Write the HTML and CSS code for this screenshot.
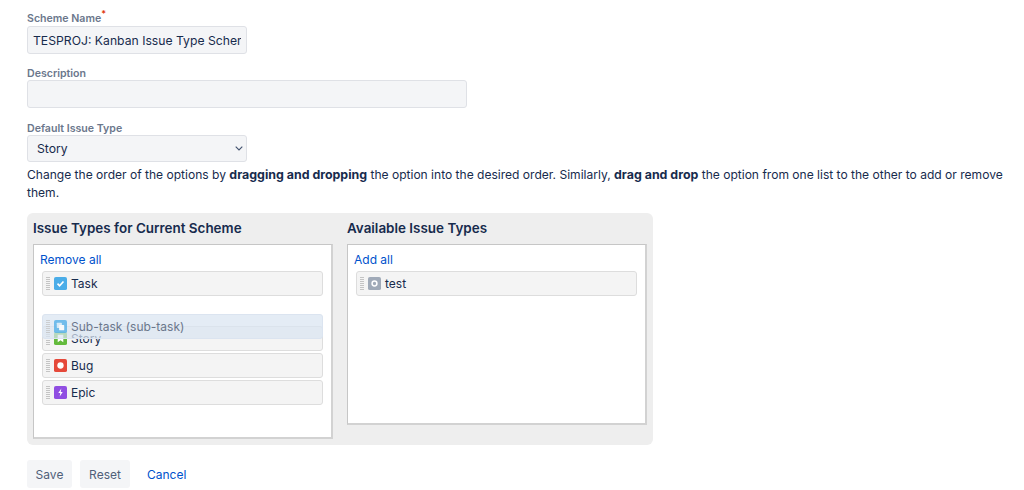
FILE: index.html
```html
<!DOCTYPE html>
<html lang="en">
<head>
<meta charset="utf-8">
<title>Issue Type Scheme</title>
<link rel="stylesheet" href="styles.css">
</head>
<body>
<form class="page">
  <div class="field name-field">
    <label class="label">Scheme Name<sup class="req">*</sup></label>
    <div class="input narrow"><span class="clip">TESPROJ: Kanban Issue Type Scheme</span></div>
  </div>
  <div class="field desc-field">
    <label class="label">Description</label>
    <div class="input wide"></div>
  </div>
  <div class="field type-field">
    <label class="label">Default Issue Type</label>
    <div class="input narrow select"><span>Story</span>
      <svg class="chev" width="8" height="5" viewBox="0 0 8 5"><path d="M.7.7L4 4l3.3-3.3" fill="none" stroke="#42526e" stroke-width="1.1"/></svg>
    </div>
  </div>
  <p class="help">Change the order of the options by <b>dragging and dropping</b> the option into the desired order. Similarly, <b>drag and drop</b> the option from one list to the other to add or remove them.</p>

  <div class="panel">
    <section class="col">
      <h3 class="col-title">Issue Types for Current Scheme</h3>
      <div class="list tall">
        <a class="link list-link">Remove all</a>
        <div class="item">
          <i class="grip"></i>
          <svg class="ic" viewBox="0 0 14 14"><rect width="14" height="14" rx="2" fill="#4bade8"/><path d="M3.8 7.2l2.2 2.2 4.2-4.6" fill="none" stroke="#fff" stroke-width="1.8"/></svg>
          <span>Task</span>
        </div>
        <div class="slot"></div>
        <div class="item">
          <i class="grip"></i>
          <svg class="ic" viewBox="0 0 14 14"><rect width="14" height="14" rx="2" fill="#63ba3c"/><path d="M4 3h6v8L7 9l-3 2z" fill="#fff"/></svg>
          <span>Story</span>
        </div>
        <div class="item">
          <i class="grip"></i>
          <svg class="ic" viewBox="0 0 14 14"><rect width="14" height="14" rx="2" fill="#e5493a"/><circle cx="7" cy="7" r="3.4" fill="#fff"/></svg>
          <span>Bug</span>
        </div>
        <div class="item">
          <i class="grip"></i>
          <svg class="ic" viewBox="0 0 14 14"><rect width="14" height="14" rx="2" fill="#904ee2"/><path d="M7.9 2.6L4.6 7.6h2.2L6.1 11.4l3.3-5H7.2z" fill="#fff"/></svg>
          <span>Epic</span>
        </div>
        <div class="item dragging">
          <i class="grip"></i>
          <svg class="ic" viewBox="0 0 14 14"><rect width="14" height="14" rx="2" fill="#4bade8"/><rect x="3" y="3" width="5.5" height="5.5" rx=".6" fill="#fff" opacity=".75"/><rect x="5.5" y="5.5" width="5.5" height="5.5" rx=".6" fill="#fff"/></svg>
          <span>Sub-task (sub-task)</span>
        </div>
      </div>
    </section>
    <section class="col">
      <h3 class="col-title">Available Issue Types</h3>
      <div class="list short">
        <a class="link list-link">Add all</a>
        <div class="item">
          <i class="grip"></i>
          <svg class="ic" viewBox="0 0 14 14"><rect width="14" height="14" rx="2" fill="#a0aab8"/><circle cx="7" cy="7" r="2.6" fill="none" stroke="#fff" stroke-width="1.6"/></svg>
          <span>test</span>
        </div>
      </div>
    </section>
  </div>

  <div class="actions">
    <button type="button" class="btn save">Save</button>
    <button type="button" class="btn">Reset</button>
    <a class="link cancel">Cancel</a>
  </div>
</form>
</body>
</html>
```
FILE: styles.css
```css
* { box-sizing: border-box; }
html, body { margin: 0; height: 490px; overflow: hidden; background: #fff; }
body { font-family: Inter, "Liberation Sans", sans-serif; font-size: 12px; color: #172b4d; }
.page { padding: 12px 0 0 27px; display: flex; flex-direction: column; }
.field { display: flex; flex-direction: column; }
.label { font-size: 10.6px; font-weight: 600; color: #6b778c; line-height: 14px; height: 14px; }
.desc-field .label, .type-field .label { height: 13px; }
.req { color: #de350b; font-size: 9px; line-height: 0; vertical-align: 5px; }
.input { height: 28px; background: #f4f5f7; border: 1px solid #dfe1e6; border-radius: 3px; display: flex; align-items: center; padding: 0 5px; font-size: 12.2px; color: #172b4d; }
.narrow { width: 220px; }
.wide { width: 440px; }
.clip { display: block; overflow: hidden; white-space: nowrap; width: 208px; }
.desc-field { margin-top: 13px; }
.type-field { margin-top: 14px; }
.select { justify-content: space-between; padding: 0 3px 0 9px; height: 27px; }
.chev { display: block; }
.help { margin: 4px 0 0; line-height: 18px; font-size: 12.06px; color: #172b4d; width: 985px; }
.help b { font-size: 12.4px; font-weight: 700; }
.panel { width: 626px; height: 232px; margin-top: 11px; padding: 6px 6px 7px; background: #eeeeee; border-radius: 6px; display: flex; gap: 14px; align-items: flex-start; }
.col { width: 300px; }
.col-title { margin: 0 0 6px; font-size: 13.45px; line-height: 19px; font-weight: 600; color: #172b4d; }
.list { position: relative; width: 300px; background: #fff; border-style: solid; border-color: #c6c6c6 #d2d2d2 #d2d2d2 #c6c6c6; border-width: 1px 2px 2px 1px; padding: 6px 8px; display: flex; flex-direction: column; gap: 2px; }
.tall { height: 195px; }
.short { height: 181px; }
.list-link { line-height: 18px; margin: 0 0 0 -2px; height: 18px; }
.link { color: #0052cc; text-decoration: none; }
.item { display: flex; align-items: center; height: 25px; background: #f4f4f4; border: 1px solid #dddddd; border-radius: 3px; padding-left: 3px; color: #172b4d; }
.slot { height: 26px; }
.grip { width: 4px; height: 14px; margin-right: 4px; flex: none; background-image: repeating-linear-gradient(#c4c4c4 0 1px, transparent 1px 2px); }
.ic { width: 13px; height: 13px; margin-right: 4px; flex: none; }
.dragging { position: absolute; top: 69px; left: 8px; background: rgba(218, 228, 241, .72); border-color: #dbe4f0; color: #6b778c; }
.dragging .grip, .dragging .ic { opacity: .75; }
.list .item { width: 281px; }
.actions { display: flex; align-items: center; margin-top: 15px; }
.btn { height: 28px; border: 0; border-radius: 3px; background: #f4f5f7; color: #505f79; font: inherit; width: 50px; padding: 0; margin-right: 8px; }
.save { width: 45px; }
.cancel { margin-left: 9px; }
```
